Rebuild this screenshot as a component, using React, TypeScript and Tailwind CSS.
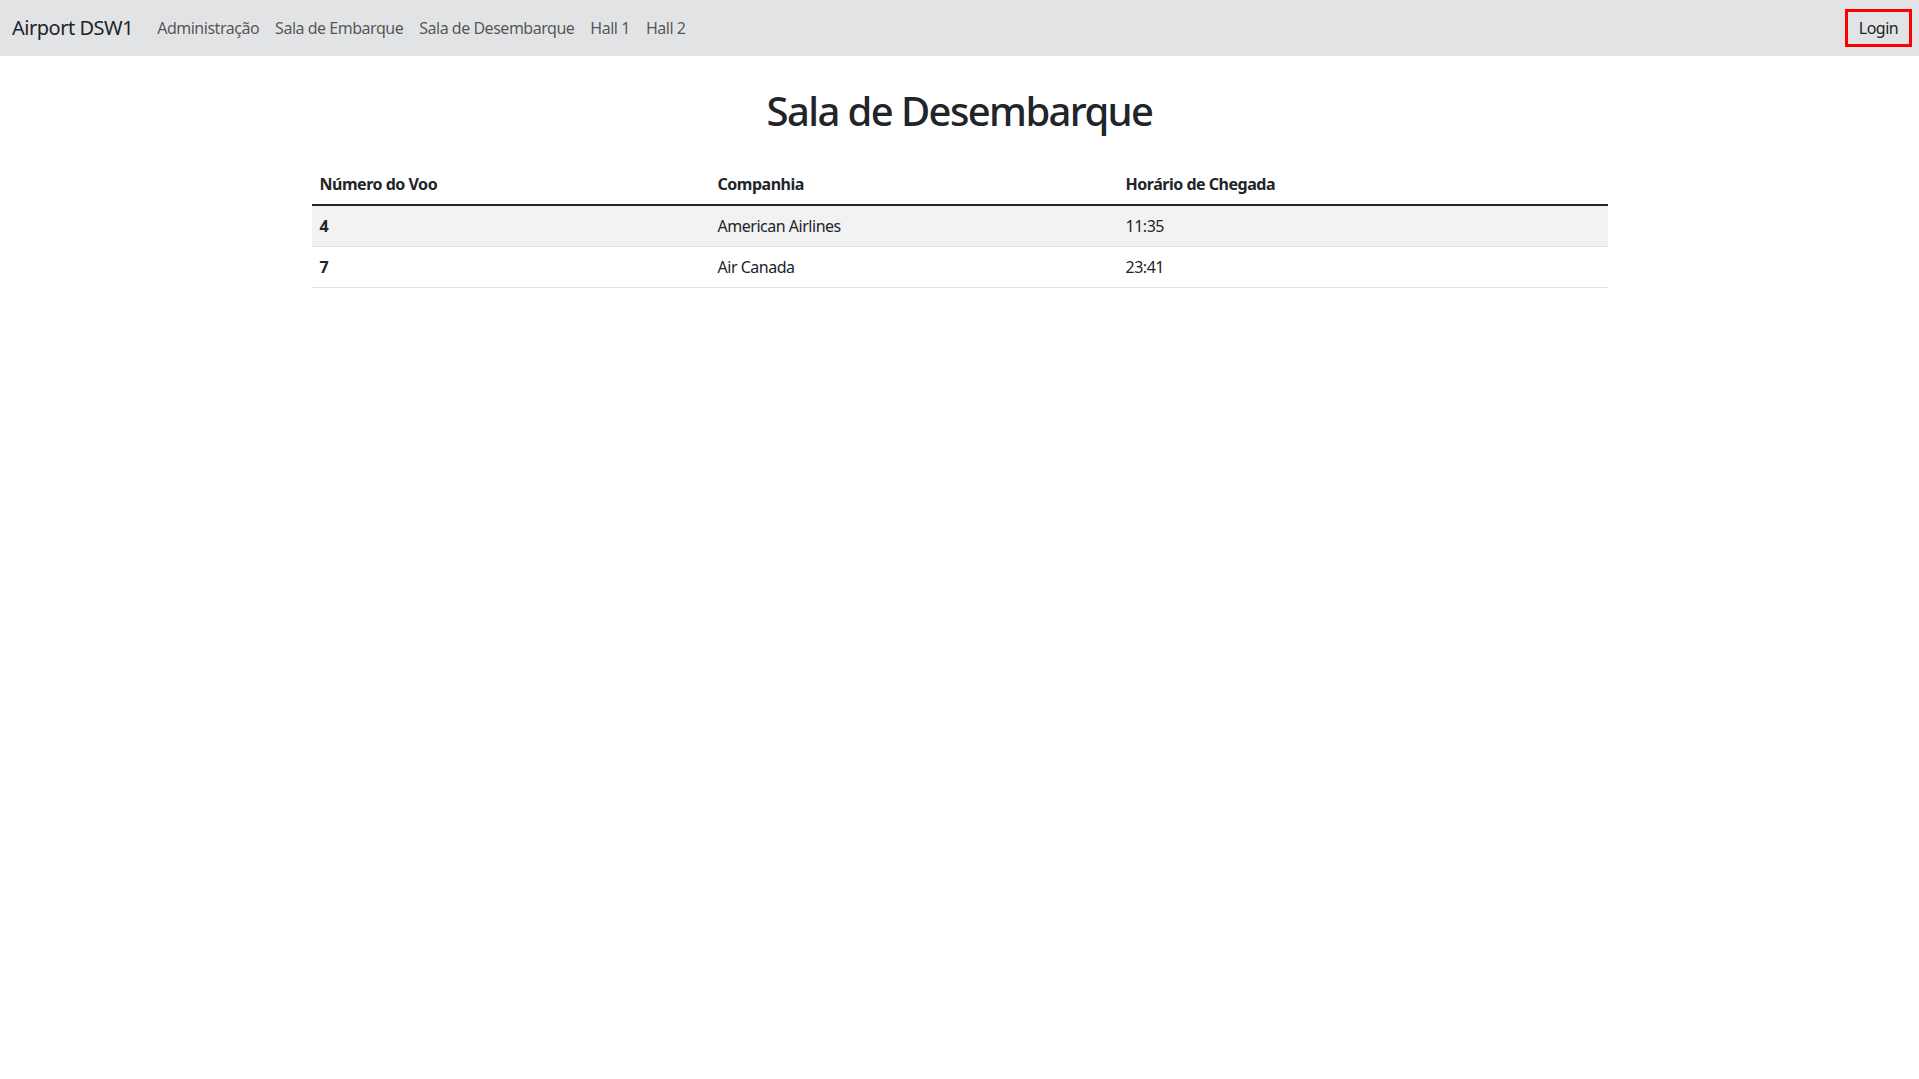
import React from "react";

const font = { fontFamily: '"Noto Sans", "Open Sans", Arial, sans-serif' };

export default function App() {
  const rows = [
    { n: "4", c: "American Airlines", h: "11:35" },
    { n: "7", c: "Air Canada", h: "23:41" },
  ];
  return (
    <div className="min-h-screen bg-white text-[#212529] tracking-[-0.03em]" style={font}>
      <nav className="h-[56px] bg-[#e2e3e5] flex items-center pl-[12px] pr-[7px]">
        <span className="text-[20px] leading-[30px] text-[#212529] mr-[16px]">Airport DSW1</span>
        <div className="flex items-center text-[16px] text-[rgba(0,0,0,0.65)]">
          <span className="px-[8px]">Administração</span>
          <span className="px-[8px]">Sala de Embarque</span>
          <span className="px-[8px]">Sala de Desembarque</span>
          <span className="px-[8px]">Hall 1</span>
          <span className="px-[8px]">Hall 2</span>
        </div>
        <div className="ml-auto h-[38px] w-[67px] border-[3px] border-[#ff0000] flex items-center justify-center text-[16px] text-[#212529]">
          Login
        </div>
      </nav>
      <div className="w-[1296px] mx-auto">
        <h1 className="text-center text-[40px] leading-[48px] font-medium tracking-[-0.04em] mt-[31px] mb-[29px]">Sala de Desembarque</h1>
        <table className="w-full border-collapse text-[16px] leading-[24px]">
          <colgroup>
            <col className="w-[398px]" />
            <col className="w-[408px]" />
            <col className="w-[490px]" />
          </colgroup>
          <thead>
            <tr className="border-b-2 border-[#212529]">
              <th className="text-left font-bold p-[8px]">Número do Voo</th>
              <th className="text-left font-bold p-[8px]">Companhia</th>
              <th className="text-left font-bold p-[8px]">Horário de Chegada</th>
            </tr>
          </thead>
          <tbody>
            {rows.map((r, i) => (
              <tr key={i} className={`border-b border-[#dee2e6] ${i === 0 ? "bg-[#f2f2f2]" : "bg-white"}`}>
                <td className="font-bold p-[8px]">{r.n}</td>
                <td className="p-[8px]">{r.c}</td>
                <td className="p-[8px]">{r.h}</td>
              </tr>
            ))}
          </tbody>
        </table>
      </div>
    </div>
  );
}
